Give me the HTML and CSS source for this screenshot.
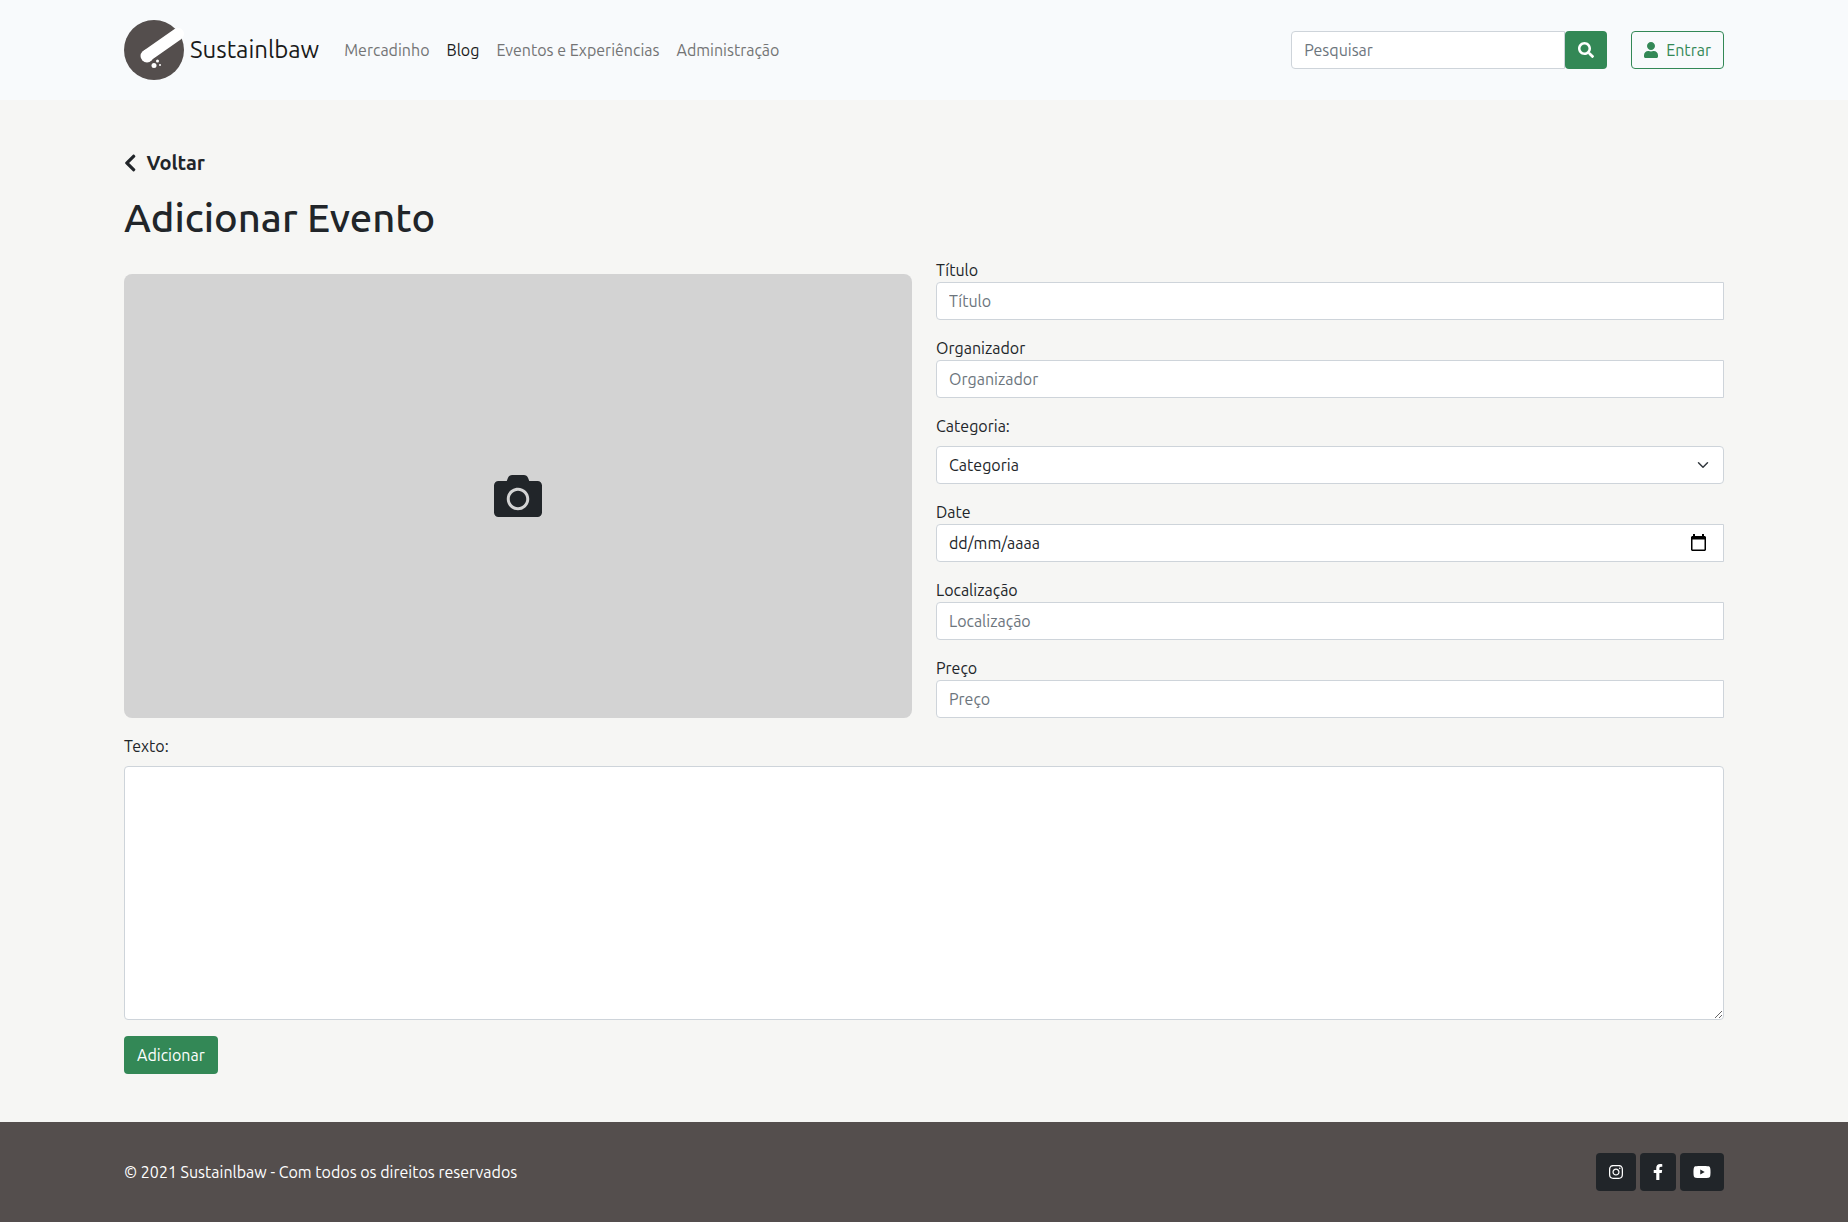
FILE: index.html
```html
<!DOCTYPE html>
<html lang="pt">
<head>
  <meta charset="utf-8">
  <meta name="viewport" content="width=device-width, initial-scale=1">
  <title>Sustainlbaw</title>
  <link rel="stylesheet" href="styles.css">
</head>
<body>
  <header class="navbar">
    <div class="container navbar-row">
      <a class="brand" href="#">
        <svg class="brand-logo" viewBox="0 0 60 60" aria-hidden="true">
          <circle cx="30" cy="30" r="30" fill="#544e4d"/>
          <path d="M24 35L54 14" stroke="#fff" stroke-width="12" stroke-linecap="round"/>
          <circle cx="23" cy="36" r="6.500" fill="#fff"/>
          <circle cx="30" cy="45.500" r="2.500" fill="#fff"/>
          <circle cx="33.500" cy="41" r="1.500" fill="#fff"/>
          <circle cx="36" cy="45" r="1" fill="#fff"/>
        </svg>
        <span>Sustainlbaw</span>
      </a>
      <nav class="nav-links">
        <a href="#">Mercadinho</a>
        <a class="active" href="#">Blog</a>
        <a href="#">Eventos e Experiências</a>
        <a href="#">Administração</a>
      </nav>
      <form class="search">
        <input class="control search-input" type="search" placeholder="Pesquisar" aria-label="Pesquisar">
        <button class="btn btn-green" type="submit" aria-label="Pesquisar">
          <svg class="icon" viewBox="0 0 512 512"><path d="M505 442.700L405.300 343c-4.500-4.500-10.600-7-17-7H372c27.600-35.300 44-79.700 44-128C416 93.100 322.900 0 208 0S0 93.100 0 208s93.100 208 208 208c48.300 0 92.700-16.400 128-44v16.300c0 6.400 2.500 12.500 7 17l99.700 99.700c9.400 9.400 24.600 9.400 33.900 0l28.300-28.300c9.400-9.400 9.400-24.600.1-34zM208 336c-70.700 0-128-57.200-128-128 0-70.700 57.200-128 128-128 70.700 0 128 57.200 128 128 0 70.700-57.200 128-128 128z"/></svg>
        </button>
      </form>
      <button class="btn btn-outline" type="button">
        <svg class="icon" viewBox="0 0 448 512"><path d="M224 256c70.700 0 128-57.300 128-128S294.700 0 224 0 96 57.300 96 128s57.300 128 128 128zm89.600 32h-16.700c-22.200 10.200-46.900 16-72.900 16s-50.600-5.800-72.900-16h-16.700C60.200 288 0 348.200 0 422.400V464c0 26.500 21.500 48 48 48h352c26.500 0 48-21.500 48-48v-41.600c0-74.200-60.200-134.400-134.400-134.400z"/></svg>
        <span>Entrar</span>
      </button>
    </div>
  </header>

  <main class="container content">
    <a class="back" href="#">
      <svg class="icon-back" viewBox="0 0 320 512" aria-hidden="true"><path d="M34.520 239.030L228.870 44.690c9.370-9.370 24.570-9.370 33.940 0l22.670 22.670c9.360 9.360 9.370 24.520.040 33.900L131.490 256l154.020 154.750c9.340 9.380 9.320 24.540-.040 33.900l-22.670 22.670c-9.370 9.370-24.570 9.370-33.940 0L34.520 272.970c-9.370-9.370-9.370-24.570 0-33.940z"/></svg>
      <span>Voltar</span>
    </a>
    <h1>Adicionar Evento</h1>

    <form class="event-form">
      <div class="form-grid">
        <button class="photo" type="button" aria-label="Imagem">
          <svg viewBox="0 32 512 448"><path d="M512 144v288c0 26.500-21.500 48-48 48H48c-26.500 0-48-21.500-48-48V144c0-26.500 21.500-48 48-48h88l12.300-32.900c7-18.700 24.900-31.100 44.900-31.100h125.500c20 0 37.900 12.400 44.900 31.100L376 96h88c26.500 0 48 21.500 48 48zM376 288c0-66.200-53.800-120-120-120s-120 53.800-120 120 53.800 120 120 120 120-53.800 120-120zm-32 0c0 48.500-39.500 88-88 88s-88-39.500-88-88 39.500-88 88-88 88 39.500 88 88z"/></svg>
        </button>
        <div class="fields">
          <div class="field">
            <label for="title">Título</label>
            <input class="control joined" id="title" type="text" placeholder="Título">
          </div>
          <div class="field">
            <label for="organizer">Organizador</label>
            <input class="control joined" id="organizer" type="text" placeholder="Organizador">
          </div>
          <div class="field spaced">
            <label for="category">Categoria:</label>
            <select class="control select" id="category"><option>Categoria</option></select>
          </div>
          <div class="field">
            <label for="date">Date</label>
            <input class="control joined date" id="date" type="text" inputmode="numeric" placeholder="dd/mm/aaaa">
          </div>
          <div class="field">
            <label for="place">Localização</label>
            <input class="control joined" id="place" type="text" placeholder="Localização">
          </div>
          <div class="field">
            <label for="price">Preço</label>
            <input class="control joined" id="price" type="text" placeholder="Preço">
          </div>
        </div>
      </div>
      <div class="field spaced">
        <label for="text">Texto:</label>
        <textarea class="control" id="text" rows="10"></textarea>
      </div>
      <button class="btn btn-green submit" type="submit">Adicionar</button>
    </form>
  </main>

  <footer class="footer">
    <div class="container footer-row">
      <span>© 2021 Sustainlbaw - Com todos os direitos reservados</span>
      <div class="social">
        <a class="btn btn-dark" href="#" aria-label="Instagram"><svg class="icon" viewBox="0 0 448 512"><path d="M224.100 141c-63.600 0-114.900 51.300-114.900 114.900s51.300 114.900 114.900 114.900S339 319.500 339 255.900 287.700 141 224.100 141zm0 189.600c-41.100 0-74.700-33.500-74.700-74.700s33.500-74.700 74.700-74.700 74.700 33.500 74.700 74.700-33.600 74.700-74.700 74.700zm146.400-194.300c0 14.900-12 26.800-26.800 26.800-14.900 0-26.800-12-26.800-26.800s12-26.800 26.800-26.800 26.800 12 26.800 26.800zm76.100 27.200c-1.700-35.900-9.900-67.700-36.200-93.900-26.200-26.200-58-34.400-93.900-36.200-37-2.100-147.900-2.100-184.900 0-35.800 1.700-67.600 9.900-93.900 36.100s-34.400 58-36.200 93.900c-2.100 37-2.100 147.900 0 184.900 1.700 35.900 9.900 67.700 36.200 93.900s58 34.400 93.900 36.200c37 2.100 147.900 2.100 184.900 0 35.900-1.700 67.700-9.900 93.900-36.200 26.200-26.200 34.400-58 36.200-93.900 2.100-37 2.100-147.800 0-184.800zM398.800 388c-7.800 19.600-22.900 34.700-42.600 42.600-29.500 11.700-99.500 9-132.100 9s-102.700 2.600-132.100-9c-19.600-7.800-34.700-22.900-42.600-42.600-11.700-29.500-9-99.500-9-132.100s-2.600-102.700 9-132.100c7.800-19.600 22.900-34.700 42.600-42.600 29.500-11.700 99.500-9 132.100-9s102.700-2.600 132.100 9c19.600 7.800 34.700 22.900 42.600 42.600 11.700 29.500 9 99.500 9 132.100s2.700 102.700-9 132.100z"/></svg></a>
        <a class="btn btn-dark" href="#" aria-label="Facebook"><svg class="icon" viewBox="0 0 320 512"><path d="M279.140 288l14.220-92.660h-88.910v-60.130c0-25.350 12.420-50.060 52.240-50.060h40.420V6.260S260.430 0 225.360 0c-73.220 0-121.080 44.380-121.080 124.720v70.620H22.890V288h81.390v224h100.170V288z"/></svg></a>
        <a class="btn btn-dark" href="#" aria-label="YouTube"><svg class="icon" viewBox="0 0 576 512"><path d="M549.655 124.083c-6.281-23.650-24.787-42.276-48.284-48.597C458.781 64 288 64 288 64S117.220 64 74.629 75.486c-23.497 6.322-42.003 24.947-48.284 48.597-11.412 42.867-11.412 132.305-11.412 132.305s0 89.438 11.412 132.305c6.281 23.650 24.787 41.500 48.284 47.821C117.220 448 288 448 288 448s170.780 0 213.371-11.486c23.497-6.321 42.003-24.171 48.284-47.821 11.412-42.867 11.412-132.305 11.412-132.305s0-89.438-11.412-132.305zm-317.510 213.508V175.185l142.739 81.205-142.739 81.201z"/></svg></a>
      </div>
    </div>
  </footer>
</body>
</html>
```
FILE: styles.css
```css
*,
*::before,
*::after {
  box-sizing: border-box;
}

body {
  display: flex;
  flex-direction: column;
  min-height: 100vh;
  margin: 0;
  background: #f6f6f4;
  color: #212529;
  font-family: Ubuntu, "Noto Sans", sans-serif;
  font-size: 16px;
  line-height: 24px;
}

a {
  color: inherit;
  text-decoration: none;
}

.container {
  width: 100%;
  max-width: 1624px;
  margin: 0 auto;
  padding: 0 12px;
}

/* Controls */

.control {
  display: block;
  width: 100%;
  height: 38px;
  margin: 0;
  padding: 6px 12px;
  border: 1px solid #ced4da;
  border-radius: 4px;
  background-color: #fff;
  color: #212529;
  font: inherit;
  appearance: none;
}

.control::placeholder {
  color: #6c757d;
  opacity: 1;
}

.joined {
  border-radius: 4px 0 0 4px;
}

.select {
  background-image: url("data:image/svg+xml,%3Csvg xmlns='http://www.w3.org/2000/svg' viewBox='0 0 16 16'%3E%3Cpath fill='none' stroke='%23343a40' stroke-linecap='round' stroke-linejoin='round' stroke-width='2' d='M2 5l6 6 6-6'/%3E%3C/svg%3E");
  background-repeat: no-repeat;
  background-position: right 14px center;
  background-size: 12px 12px;
}

.date {
  background-image: url("data:image/svg+xml,%3Csvg xmlns='http://www.w3.org/2000/svg' viewBox='0 0 15 17'%3E%3Cpath fill-rule='evenodd' d='M2 0h2v2h7V0h2v2h1l1 1v13l-1 1H1l-1-1V3l1-1h1zM1.500 5.500v10h12v-10z'/%3E%3C/svg%3E");
  background-repeat: no-repeat;
  background-position: right 17px top 9px;
  background-size: 15px 17px;
}

.control.date::placeholder {
  color: #212529;
}

textarea.control {
  height: auto;
  min-height: 254px;
  resize: vertical;
}

.btn {
  display: inline-flex;
  align-items: center;
  justify-content: center;
  gap: 8px;
  height: 38px;
  padding: 6px 12px;
  border: 1px solid transparent;
  border-radius: 4px;
  font: inherit;
  cursor: pointer;
}

.btn-green {
  background: #338856;
  color: #fff;
}

.btn-outline {
  border-color: #338856;
  background: transparent;
  color: #338856;
}

.btn-dark {
  background: #212529;
  color: #fff;
}

.icon {
  height: 16px;
  fill: currentColor;
}

/* Header */

.navbar {
  background: #f8fafc;
}

.navbar-row {
  display: flex;
  align-items: center;
  min-height: 100px;
}

.brand {
  display: flex;
  align-items: center;
  gap: 6px;
  margin-right: 17px;
  color: #1a1a1a;
  font-size: 24px;
}

.brand-logo {
  width: 60px;
  height: 60px;
}

.nav-links {
  display: flex;
  gap: 1px;
  margin-right: auto;
  color: #737475;
}

.nav-links a {
  padding: 8px;
}

.nav-links .active {
  color: #1a1a1a;
}

.search {
  display: flex;
  width: 316px;
  margin-right: 24px;
}

.search-input {
  flex: 1;
  min-width: 0;
  border-radius: 4px 0 0 4px;
}

/* Event form */

.content {
  flex: 1;
  padding-top: 48px;
  padding-bottom: 48px;
}

.back {
  display: inline-flex;
  align-items: center;
  gap: 10px;
  margin-bottom: 16px;
  font-size: 20px;
  font-weight: 600;
  line-height: 30px;
}

.icon-back {
  height: 20px;
  fill: currentColor;
}

h1 {
  margin: 0 0 16px;
  font-size: 40px;
  font-weight: 500;
  line-height: 48px;
}

.event-form {
  display: flex;
  flex-direction: column;
  gap: 16px;
}

.form-grid {
  display: grid;
  grid-template-columns: 1fr 1fr;
  gap: 24px;
}

.photo {
  display: flex;
  align-items: center;
  justify-content: center;
  margin-top: 16px;
  padding: 0;
  border: 0;
  border-radius: 8px;
  background: #d3d3d3;
  cursor: pointer;
}

.photo svg {
  width: 48px;
  height: 42px;
  fill: #212529;
}

.fields {
  display: flex;
  flex-direction: column;
  gap: 16px;
}

.field {
  display: flex;
  flex-direction: column;
}

.spaced {
  gap: 8px;
}

.submit {
  align-self: flex-start;
}

/* Footer */

.footer {
  background: #544e4d;
  color: #fff;
}

.footer-row {
  display: flex;
  align-items: center;
  justify-content: space-between;
  min-height: 100px;
}

.social {
  display: flex;
  gap: 4px;
}
```
